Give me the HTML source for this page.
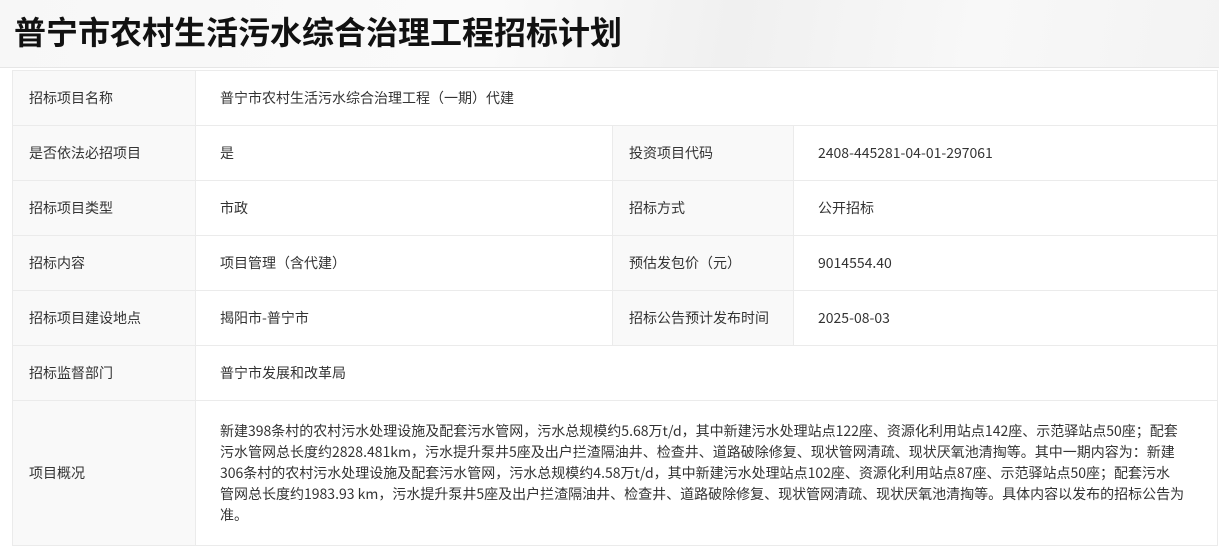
<!DOCTYPE html>
<html><head><meta charset="utf-8"><style>
body{margin:0;width:1219px;height:543px;overflow:hidden;background:#fff;font-family:"Noto Sans CJK SC","Liberation Sans",sans-serif;color:#333}
.hd{height:67px;background:linear-gradient(100deg,#f7f7f7 0%,#fafafa 40%,#f0f0f0 60%,#f8f8f8 80%,#f3f3f3 100%);border-bottom:1px solid #e6e6e6;position:relative}
.hd h1{margin:0;position:absolute;left:14px;top:8px;font-size:32px;font-weight:bold;color:#111;font-family:"Noto Sans CJK SC",sans-serif;letter-spacing:0}
table{position:absolute;left:12px;top:70px;width:1205px;border-collapse:collapse;font-size:14px;table-layout:fixed}
td{border:1px solid #ebebeb;height:55px;padding:0 0 0 18px;vertical-align:middle;color:#333;box-sizing:border-box}
td.l{background:#f9f9f9;padding-left:16px}
td.v{padding-left:24px}
.long td{height:145px;line-height:21px}
</style></head><body>
<div class="hd"><h1>普宁市农村生活污水综合治理工程招标计划</h1></div>
<table>
<colgroup><col style="width:183px"><col style="width:417px"><col style="width:181px"><col style="width:424px"></colgroup>
<tr><td class="l">招标项目名称</td><td class="v" colspan="3">普宁市农村生活污水综合治理工程（一期）代建</td></tr>
<tr><td class="l">是否依法必招项目</td><td class="v">是</td><td class="l">投资项目代码</td><td class="v">2408-445281-04-01-297061</td></tr>
<tr><td class="l">招标项目类型</td><td class="v">市政</td><td class="l">招标方式</td><td class="v">公开招标</td></tr>
<tr><td class="l">招标内容</td><td class="v">项目管理（含代建）</td><td class="l">预估发包价（元）</td><td class="v">9014554.40</td></tr>
<tr><td class="l">招标项目建设地点</td><td class="v">揭阳市-普宁市</td><td class="l">招标公告预计发布时间</td><td class="v">2025-08-03</td></tr>
<tr><td class="l">招标监督部门</td><td class="v" colspan="3">普宁市发展和改革局</td></tr>
<tr class="long"><td class="l">项目概况</td><td class="v" colspan="3" style="padding-right:26px">新建398条村的农村污水处理设施及配套污水管网，污水总规模约5.68万t/d，其中新建污水处理站点122座、资源化利用站点142座、示范驿站点50座；配套<br>污水管网总长度约2828.481km，污水提升泵井5座及出户拦渣隔油井、检查井、道路破除修复、现状管网清疏、现状厌氧池清掏等。其中一期内容为：新建<br>306条村的农村污水处理设施及配套污水管网，污水总规模约4.58万t/d，其中新建污水处理站点102座、资源化利用站点87座、示范驿站点50座；配套污水<br>管网总长度约1983.93 km，污水提升泵井5座及出户拦渣隔油井、检查井、道路破除修复、现状管网清疏、现状厌氧池清掏等。具体内容以发布的招标公告为<br>准。</td></tr>
</table>
</body></html>
